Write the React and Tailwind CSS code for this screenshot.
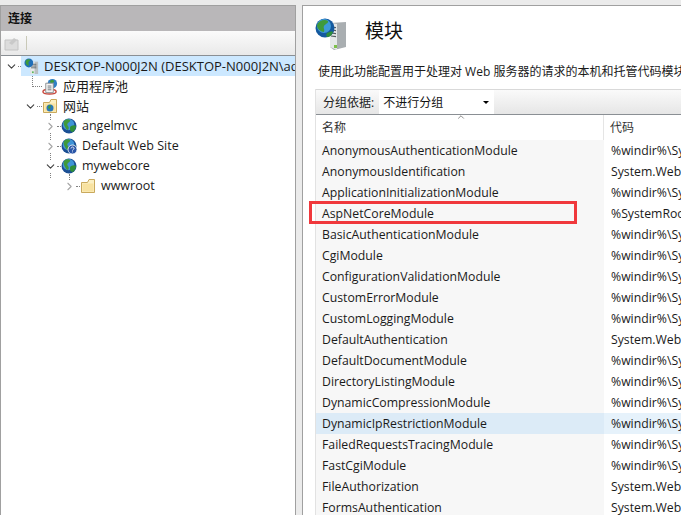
import { ChevronDown, ChevronRight } from "lucide-react";

const FONT = "font-['Open_Sans','Noto_Sans_CJK_SC',sans-serif]";

const modules = [
  ["AnonymousAuthenticationModule", "%windir%\\System32\\inetsrv\\authanon.dll"],
  ["AnonymousIdentification", "System.Web.Security.AnonymousIdentificationModule"],
  ["ApplicationInitializationModule", "%windir%\\System32\\inetsrv\\warmup.dll"],
  ["AspNetCoreModule", "%SystemRoot%\\system32\\inetsrv\\aspnetcore.dll"],
  ["BasicAuthenticationModule", "%windir%\\System32\\inetsrv\\authbas.dll"],
  ["CgiModule", "%windir%\\System32\\inetsrv\\cgi.dll"],
  ["ConfigurationValidationModule", "%windir%\\System32\\inetsrv\\validcfg.dll"],
  ["CustomErrorModule", "%windir%\\System32\\inetsrv\\custerr.dll"],
  ["CustomLoggingModule", "%windir%\\System32\\inetsrv\\iislog.dll"],
  ["DefaultAuthentication", "System.Web.Security.DefaultAuthenticationModule"],
  ["DefaultDocumentModule", "%windir%\\System32\\inetsrv\\defdoc.dll"],
  ["DirectoryListingModule", "%windir%\\System32\\inetsrv\\dirlist.dll"],
  ["DynamicCompressionModule", "%windir%\\System32\\inetsrv\\compdyn.dll"],
  ["DynamicIpRestrictionModule", "%windir%\\System32\\inetsrv\\diprestr.dll"],
  ["FailedRequestsTracingModule", "%windir%\\System32\\inetsrv\\iisfreb.dll"],
  ["FastCgiModule", "%windir%\\System32\\inetsrv\\iisfcgi.dll"],
  ["FileAuthorization", "System.Web.Security.FileAuthorizationModule"],
  ["FormsAuthentication", "System.Web.Security.FormsAuthenticationModule"],
];

function Globe({ help = false }) {
  return (
    <svg width="16" height="16" viewBox="0 0 16 16" className="shrink-0">
      <circle cx="8" cy="8" r="7.5" fill="#1b4f94" />
      <circle cx="7.500" cy="6.500" r="5.800" fill="#3f93d6" />
      <path d="M3 3c2-2 5-2 6-1 1 1-1 2-2 3S6 7 7 8s1 3 0 4c-1 0-2-1-3-3S2 5 3 3z" fill="#3f9a3a" />
      <path d="M10 8c2-1 4-1 5 0 0 2-1 4-3 6-2 0-3-1-3-3s0-2 1-3z" fill="#2f8f3a" />
      {help && <circle cx="11.500" cy="11.500" r="4.500" fill="#2a56a8" stroke="#fff" strokeWidth="0.8" />}
      {help && <path d="M10 10.500c0-2 3-2 3 0 0 1-1.500 1-1.500 2M11.500 13.500v.8" stroke="#fff" strokeWidth="0.9" fill="none" />}
    </svg>
  );
}

function Folder({ children }) {
  return (
    <svg width="16" height="16" viewBox="0 0 16 16" className="shrink-0">
      <path d="M1.500 4.500h6l1.500-3h5.500v13h-13z" fill="#fbf0c4" stroke="#c9a95c" />
      <path d="M2.500 5.500h11v8h-11z" fill="#f8e2a0" />
      {children}
    </svg>
  );
}

function ServerGlobe() {
  return (
    <svg width="15" height="17" viewBox="0 0 17 19" className="shrink-0">
      <path d="M7 4h9v14H7z" fill="#b9bfc2" />
      <path d="M7 4h5v14H7z" fill="#e7eaeb" />
      <path d="M8 7h6M8 9h6M8 11h6" stroke="#5c6468" />
      <rect x="9" y="15" width="2" height="2" fill="#5cb85c" />
      <circle cx="5.500" cy="5.500" r="5" fill="#1f6fb8" />
      <path d="M2 3c2-2 4-2 5-1 0 1-2 2-2 3s1 2 0 4C3 8 1 6 2 3z" fill="#3f9a3a" />
    </svg>
  );
}

function AppPool() {
  return (
    <svg width="16" height="17" viewBox="0 0 17 17" className="shrink-0">
      <ellipse cx="8" cy="14" rx="7" ry="2.500" fill="none" stroke="#c8473c" strokeWidth="1.500" />
      <circle cx="11" cy="5.500" r="5" fill="#2f7fc4" />
      <path d="M9 2c2-1 4 0 4 1s-2 2-3 2-2-2-1-3z" fill="#3f9a3a" />
      <path d="M4 5h8v10H4z" fill="#f4f4f4" stroke="#8b8f92" />
      <path d="M6 8h4M6 10h4M6 12h4" stroke="#6d7478" />
    </svg>
  );
}

function BigServer() {
  return (
    <svg width="33" height="33" viewBox="0 0 33 33" className="mt-[6px] shrink-0">
      <path d="M15 5l16-1v25l-12 3-4-3z" fill="#a9aeb1" />
      <path d="M15 5l7 1v26l-7-3z" fill="#e5e8e9" />
      <path d="M16 9l5 .6M16 12l5 .6M16 15l5 .6M16 18l5 .6" stroke="#555c60" strokeWidth="1.200" />
      <rect x="19" y="27" width="3" height="3" fill="#7cc04a" />
      <circle cx="10" cy="10" r="9.500" fill="#14599f" />
      <circle cx="9" cy="8" r="7" fill="#3d9ad8" />
      <path d="M2 7c2-5 8-6 11-4 1 2-3 3-4 5s1 3 0 6c-3 0-7-3-7-7z" fill="#3f9a3a" />
      <path d="M12 15c2-1 5-2 6-1-1 3-3 5-6 5-1-1-1-3 0-4z" fill="#2f8f3a" />
    </svg>
  );
}

// one row of the connections tree
function TreeRow({ indent, stub = "w-[4px]", open, icon, label, selected, arrow = true, size = "text-[12.5px]" }) {
  return (
    <div className={`relative flex h-[20px] items-center ${indent}`}>
      {arrow &&
        (open ? (
          <ChevronDown size={13} strokeWidth={2} className="w-[13px] shrink-0 bg-white text-[#404040]" />
        ) : (
          <ChevronRight size={13} strokeWidth={2} className="w-[13px] shrink-0 bg-white text-[#a6a6a6]" />
        ))}
      <span className={`${stub} shrink-0 border-t border-dotted border-[#808080]`} />
      <div className={`flex h-[20px] min-w-0 flex-1 items-center gap-[3px] ${selected ? "bg-[#cce8ff] pl-[3px]" : ""}`}>
        {icon}
        <span className={`ml-[2px] whitespace-nowrap leading-[20px] text-[#1a1a1a] ${size}`}>{label}</span>
      </div>
    </div>
  );
}

export default function App() {
  return (
    <div className={`${FONT} flex h-[515px] w-[681px] overflow-hidden bg-[#ebebeb] pt-[5px]`}>
      <div className="flex w-[296px] shrink-0 flex-col border-x border-t border-[#a0a0a0] bg-white">
        <div className="flex h-[25px] shrink-0 items-center bg-[#b9b7b9] pl-[7px] text-[12px] font-semibold text-[#111]">
          连接
        </div>
        <div className="flex h-[25px] shrink-0 items-center gap-[7px] border-b border-[#8a8f94] bg-gradient-to-b from-[#fbfbfb] to-[#e9e9e9] pl-[3px]">
          <svg width="15" height="15" viewBox="0 0 15 15">
            <path d="M1 4h13v10H1z" fill="#dcdcdc" stroke="#c4c4c4" />
            <path d="M5 7l5-5 3 2-5 5z" fill="#c9c9c9" />
          </svg>
          <span className="h-[14px] w-[1px] bg-[#c9c9b8]" />
        </div>
        <div className="relative flex flex-1 flex-col overflow-hidden">
          {/* dotted tree guides, the chevrons sit over them */}
          <span className="absolute left-[31px] top-[18px] h-[13px] border-l border-dotted border-[#808080]" />
          <span className="absolute left-[49px] top-[58px] h-[64px] border-l border-dotted border-[#808080]" />
          <span className="absolute left-[68px] top-[118px] h-[8px] border-l border-dotted border-[#808080]" />
          <TreeRow indent="pl-[4px]" stub="w-[3px]" open selected icon={<ServerGlobe />} size="text-[13px]" label="DESKTOP-N000J2N (DESKTOP-N000J2N\administrator)" />
          <TreeRow indent="pl-[32px]" stub="w-[9px]" arrow={false} icon={<AppPool />} label="应用程序池" size="text-[13px]" />
          <TreeRow
            indent="pl-[23px]"
            stub="w-[5px]"
            open
            icon={
              <Folder>
                <circle cx="8" cy="10" r="3.500" fill="#2a78b8" />
                <path d="M6 9c1-2 3-2 3-1s-1 1-1 3c-1 0-2-1-2-2z" fill="#3f9a3a" />
              </Folder>
            }
            label="网站"
            size="text-[13px]"
          />
          <TreeRow indent="pl-[43px]" icon={<Globe />} label="angelmvc" />
          <TreeRow indent="pl-[43px]" icon={<Globe help />} label="Default Web Site" />
          <TreeRow indent="pl-[43px]" open icon={<Globe />} label="mywebcore" />
          <TreeRow indent="pl-[62px]" icon={<Folder />} label="wwwroot" />
        </div>
      </div>

      <div className="ml-[6px] flex min-w-0 flex-1 flex-col border-l border-t border-[#a0a0a0] bg-white">
        <div className="flex h-[50px] shrink-0 items-center pl-[12px]">
          <BigServer />
          <h1 className="ml-[17px] text-[19px] font-normal text-[#111]">模块</h1>
        </div>
        <p className="h-[33px] shrink-0 whitespace-nowrap pl-[15px] pt-[6px] text-[12px] leading-[20px] text-[#1a1a1a]">
          使用此功能配置用于处理对 Web 服务器的请求的本机和托管代码模块。
        </p>
        <div className="ml-[12px] flex min-h-0 flex-1 flex-col border-l border-[#e2e2e2]">
          <div className="flex h-[26px] shrink-0 items-stretch border-y border-t-[#d9d9d9] border-b-[#8a8f94] bg-gradient-to-b from-[#fafafa] to-[#e6e6e6] pl-[7px]">
            <span className="self-center pt-[1px] text-[12px] text-[#222]">分组依据:</span>
            <div className="ml-[5px] flex w-[115px] items-center justify-between bg-white pl-[4px] pr-[3px] pt-[1px]">
              <span className="text-[12px] text-[#111]">不进行分组</span>
              <span className="mr-[2px] h-0 w-0 border-x-[3px] border-t-[3px] border-x-transparent border-t-black" />
            </div>
          </div>
          <div className="relative flex h-[25px] shrink-0 text-[12px] text-[#333]">
            <ChevronDown size={10} className="absolute left-[140px] top-[-3px] rotate-180 text-[#777]" />
            <div className="flex w-[288px] items-center border-r border-[#e5e5e5] pl-[6px]">名称</div>
            <div className="flex flex-1 items-center pl-[6px]">代码</div>
          </div>
          <div className="min-h-0 flex-1">
            {modules.map(([name, code]) => (
              <div
                key={name}
                className={`relative flex h-[21px] text-[12.25px] leading-[21px] text-[#1a1a1a] ${name === "DynamicIpRestrictionModule" ? "bg-[#dcebf7]" : ""}`}
              >
                <div className={`w-[288px] shrink-0 pl-[6px] ${name === "DynamicIpRestrictionModule" ? "" : "bg-[#f7f7f7]"}`}>
                  {name}
                </div>
                <div className={`min-w-0 flex-1 overflow-hidden whitespace-nowrap pl-[7px] ${name === "DynamicIpRestrictionModule" ? "bg-[#e6f2fb]" : ""}`}>
                  {code}
                </div>
                {name === "AspNetCoreModule" && (
                  <span className="absolute left-[-7px] top-[-2px] h-[23px] w-[268px] border-[3px] border-[#f0383c]" />
                )}
              </div>
            ))}
          </div>
        </div>
      </div>
    </div>
  );
}
